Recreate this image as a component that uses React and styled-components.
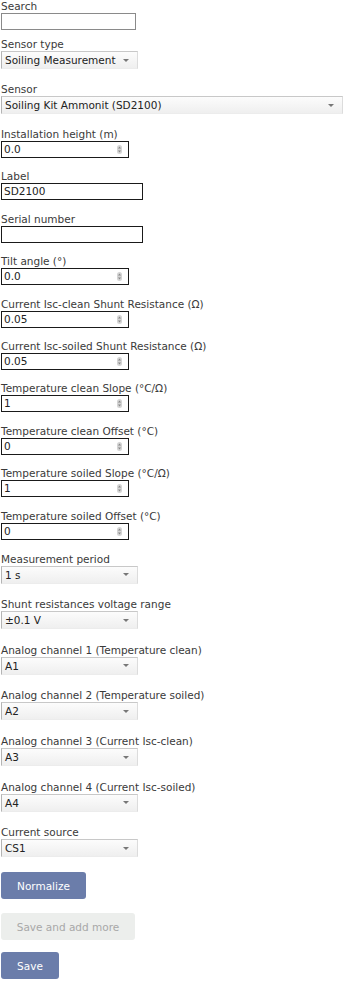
import React from 'react';
import styled, { createGlobalStyle } from 'styled-components';

const GlobalStyle = createGlobalStyle`
  html, body {
    margin: 0;
    padding: 0;
    background: #fff;
  }
  body {
    font-family: "DejaVu Sans", sans-serif;
    font-size: 10.5px;
    color: #3a3a3a;
  }
`;

const Form = styled.form`
  display: flex;
  flex-direction: column;
  padding: 0 0 0 1px;
`;

const Field = styled.div`
  display: flex;
  flex-direction: column;
  align-items: flex-start;
  margin-bottom: ${({ $gap }) => $gap ?? 12.4}px;
`;

const Label = styled.label`
  display: block;
  line-height: 12px;
  margin-bottom: 1px;
  color: #3a3a3a;
`;

const TextInput = styled.div`
  box-sizing: border-box;
  width: ${({ $w }) => $w}px;
  height: 17px;
  border: 1px solid ${({ $light }) => ($light ? '#8a8a8a' : '#1a1a1a')};
  background: #fff;
  padding: 0 2px;
  line-height: 15px;
  color: #222;
  position: relative;
`;

const Spinner = styled.svg`
  position: absolute;
  right: 6px;
  top: 3px;
`;

const Select = styled.div`
  box-sizing: border-box;
  width: ${({ $w }) => $w}px;
  height: 18px;
  border: 1px solid #dcdcdc;
  border-left-color: #b4b4b4;
  border-top-color: #c8c8c8;
  border-bottom-color: #ececec;
  background: linear-gradient(#fcfcfc, #efefef);
  display: flex;
  align-items: center;
  justify-content: space-between;
  padding: 0 8px 0 3px;
  color: #222;
`;

const Arrow = styled.span`
  width: 0;
  height: 0;
  border-left: 3px solid transparent;
  border-right: 3px solid transparent;
  border-top: 3px solid #777;
`;

const Button = styled.button`
  box-sizing: border-box;
  width: ${({ $w }) => $w}px;
  height: 27px;
  border: none;
  border-radius: 3px;
  font-family: "DejaVu Sans", sans-serif;
  font-size: 10.5px;
  padding: 0;
  background: ${({ $disabled }) => ($disabled ? '#eceeec' : '#6b7daa')};
  color: ${({ $disabled }) => ($disabled ? '#a8a8a8' : '#fff')};
  margin-bottom: ${({ $mb }) => $mb}px;
`;

const SpinIcon = () => (
  <Spinner width="5" height="9" viewBox="0 0 5 9">
    <rect x="0" y="0" width="5" height="9" rx="2.5" fill="#d4d4d4" />
    <path d="M1 3.5 L2.5 1.5 L4 3.5 Z" fill="#888" />
    <path d="M1 5.5 L2.5 7.5 L4 5.5 Z" fill="#888" />
  </Spinner>
);

const numberFields = [
  ['Tilt angle (°)', '0.0'],
  ['Current Isc-clean Shunt Resistance (Ω)', '0.05'],
  ['Current Isc-soiled Shunt Resistance (Ω)', '0.05'],
  ['Temperature clean Slope (°C/Ω)', '1'],
  ['Temperature clean Offset (°C)', '0'],
  ['Temperature soiled Slope (°C/Ω)', '1'],
];

const selectFields = [
  ['Measurement period', '1 s'],
  ['Shunt resistances voltage range', '±0.1 V'],
  ['Analog channel 1 (Temperature clean)', 'A1'],
  ['Analog channel 2 (Temperature soiled)', 'A2'],
  ['Analog channel 3 (Current Isc-clean)', 'A3'],
  ['Analog channel 4 (Current Isc-soiled)', 'A4'],
];

const App = () => {
  return (
    <>
      <GlobalStyle />
      <Form onSubmit={(e) => e.preventDefault()}>
        <Field $gap={8}>
          <Label>Search</Label>
          <TextInput $w={135} $light />
        </Field>
        <Field $gap={14}>
          <Label>Sensor type</Label>
          <Select $w={137}>
            Soiling Measurement <Arrow />
          </Select>
        </Field>
        <Field $gap={14}>
          <Label>Sensor</Label>
          <Select $w={342}>
            Soiling Kit Ammonit (SD2100) <Arrow />
          </Select>
        </Field>
        <Field>
          <Label>Installation height (m)</Label>
          <TextInput $w={128}>
            0.0
            <SpinIcon />
          </TextInput>
        </Field>
        <Field>
          <Label>Label</Label>
          <TextInput $w={142}>SD2100</TextInput>
        </Field>
        <Field>
          <Label>Serial number</Label>
          <TextInput $w={142} />
        </Field>
        {numberFields.map(([label, value]) => (
          <Field key={label}>
            <Label>{label}</Label>
            <TextInput $w={128}>
              {value}
              <SpinIcon />
            </TextInput>
          </Field>
        ))}
        <Field $gap={13}>
          <Label>Temperature soiled Offset (°C)</Label>
          <TextInput $w={128}>
            0
            <SpinIcon />
          </TextInput>
        </Field>
        {selectFields.map(([label, value]) => (
          <Field key={label} $gap={14.67}>
            <Label>{label}</Label>
            <Select $w={137}>
              {value} <Arrow />
            </Select>
          </Field>
        ))}
        <Field $gap={15}>
          <Label>Current source</Label>
          <Select $w={137}>
            CS1 <Arrow />
          </Select>
        </Field>
        <div>
          <Button type="button" $w={85} $mb={14}>Normalize</Button>
        </div>
        <div>
          <Button type="button" $w={134} $mb={12} $disabled>Save and add more</Button>
        </div>
        <div>
          <Button type="button" $w={58} $mb={0}>Save</Button>
        </div>
      </Form>
    </>
  );
};

export default App;
